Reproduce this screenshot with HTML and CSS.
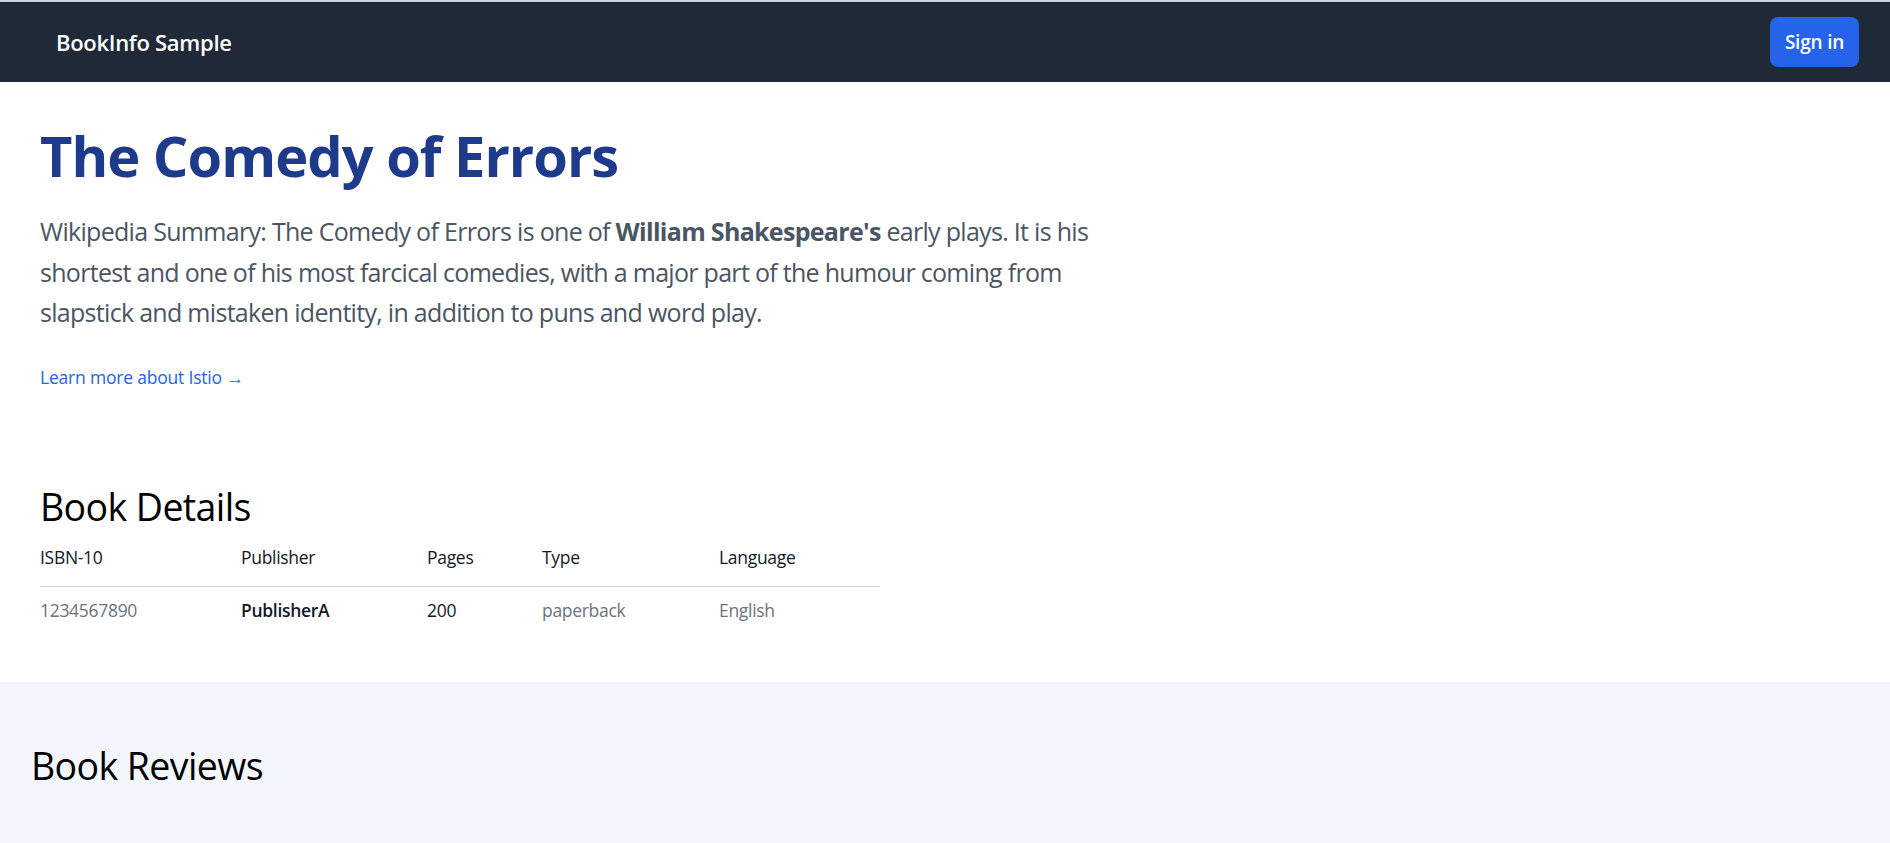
FILE: index.html
```html
<!DOCTYPE html>
<html lang="en">
<head>
<meta charset="utf-8">
<title>BookInfo Sample</title>
<link rel="stylesheet" href="styles.css">
</head>
<body>
<header class="nav">
  <span class="brand">BookInfo Sample</span>
  <button class="signin" type="button">Sign in</button>
</header>
<main>
  <section class="summary">
    <h1 class="title">The Comedy of Errors</h1>
    <p class="lead">Wikipedia Summary: The Comedy of Errors is one of <strong>William Shakespeare's</strong> early plays. It is his shortest and one of his most farcical comedies, with a major part of the humour coming from slapstick and mistaken identity, in addition to puns and word play.</p>
    <p class="more"><a class="more-link" href="#">Learn more about Istio →</a></p>
  </section>
  <section class="details">
    <h2 class="section-title">Book Details</h2>
    <table class="details-table">
      <thead>
        <tr>
          <th class="col-isbn">ISBN-10</th>
          <th class="col-pub">Publisher</th>
          <th class="col-pages">Pages</th>
          <th class="col-type">Type</th>
          <th class="col-lang">Language</th>
        </tr>
      </thead>
      <tbody>
        <tr>
          <td class="muted">1234567890</td>
          <td class="strong">PublisherA</td>
          <td class="dark">200</td>
          <td class="muted">paperback</td>
          <td class="muted">English</td>
        </tr>
      </tbody>
    </table>
  </section>
  <section class="reviews">
    <h2 class="section-title">Book Reviews</h2>
  </section>
</main>
</body>
</html>
```

FILE: styles.css
```css
* {
  box-sizing: border-box;
}

html, body {
  margin: 0;
  padding: 0;
  background: #ffffff;
}

body {
  font-family: "Open Sans", "Noto Sans", "Liberation Sans", sans-serif;
  color: #000000;
}

.nav {
  display: flex;
  align-items: center;
  justify-content: space-between;
  height: 82px;
  padding: 0 31px 0 56px;
  background: #1f2937;
  border-top: 2px solid #c9d3e3;
}

.brand {
  color: #ffffff;
  font-size: 22px;
  line-height: 30px;
  font-weight: 600;
  letter-spacing: -0.3px;
}

.signin {
  width: 89px;
  height: 50px;
  padding: 0;
  border: 0;
  border-radius: 8px;
  background: #2563eb;
  color: #ffffff;
  font-family: inherit;
  font-size: 19px;
  font-weight: 600;
  line-height: 30px;
  letter-spacing: -0.2px;
}

.summary {
  padding: 45px 40px 40px;
}

.title {
  margin: 0 0 28px;
  font-size: 56px;
  line-height: 56px;
  font-weight: 700;
  letter-spacing: -1px;
  color: #1e3a8a;
}

.lead {
  margin: 0 0 32px;
  max-width: 1120px;
  font-size: 25px;
  line-height: 40.6px;
  color: #4b5563;
  letter-spacing: -0.7px;
}

.lead strong {
  font-weight: 700;
  color: #4b5563;
}

.more {
  margin: 0;
  font-size: 17.5px;
  line-height: 25px;
}

.more-link {
  color: #2563eb;
  font-weight: 500;
  text-decoration: none;
  letter-spacing: -0.2px;
}

.details {
  padding: 54.5px 40px 49px;
}

.section-title {
  margin: 0;
  font-size: 37.5px;
  line-height: 45px;
  font-weight: 400;
  color: #000000;
  letter-spacing: -0.6px;
}

.details-table {
  width: 840px;
  table-layout: fixed;
  border-collapse: collapse;
  font-size: 17.5px;
  line-height: 25px;
  letter-spacing: -0.3px;
}

.details-table th {
  padding: 15.5px 0 16px;
  text-align: left;
  font-weight: 500;
  color: #111827;
  border-bottom: 1px solid #d1d5db;
}

.details-table td {
  padding: 11px 0 10px;
  text-align: left;
}

.col-isbn { width: 201px; }
.col-pub { width: 186px; }
.col-pages { width: 115px; }
.col-type { width: 177px; }
.col-lang { width: 161px; }

.muted {
  color: #6b7280;
}

.strong {
  color: #111827;
  font-weight: 600;
}

.dark {
  color: #111827;
}

.reviews {
  background: #f3f6fd;
  padding: 61.5px 31px 120px;
}
```
